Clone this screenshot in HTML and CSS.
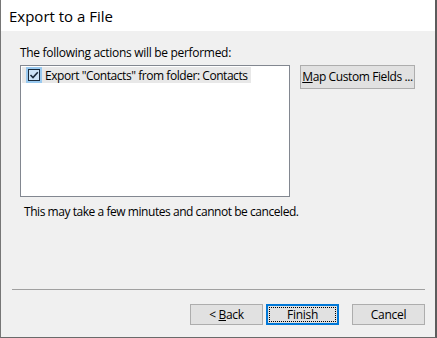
FILE: index.html
```html
<!DOCTYPE html>
<html lang="en">
<head>
    <meta charset="UTF-8">
    <title>Export to a File</title>
    <link rel="stylesheet" href="styles.css">
</head>
<body>
    <div class="dialog">
        <div class="title-bar">Export to a File</div>

        <div class="content">
            <p class="label">The following actions will be performed:</p>

            <div class="actions-row">
                <div class="action-list">
                    <div class="action-item">
                        <svg class="check" width="16" height="16" viewBox="0 0 16 16">
                            <rect x="0" y="0" width="16" height="16" fill="#99c9ef"/>
                            <rect x="2.5" y="2.5" width="11" height="11" fill="#cce4f7" stroke="#1a2b3c"/>
                            <path d="M4.5 8 L7 10.5 L11.8 5.2" fill="none" stroke="#1a2b3c" stroke-width="1.6"/>
                        </svg>
                        <span>Export "Contacts" from folder: Contacts</span>
                    </div>
                </div>
                <button class="btn btn-map"><u>M</u>ap Custom Fields ...</button>
            </div>

            <p class="note">This may take a few minutes and cannot be canceled.</p>
        </div>

        <div class="footer">
            <div class="separator"></div>
            <div class="buttons">
                <button class="btn">&lt; <u>B</u>ack</button>
                <button class="btn btn-default"><span class="focus">Finish</span></button>
                <button class="btn btn-cancel">Cancel</button>
            </div>
        </div>
    </div>
</body>
</html>
```

FILE: styles.css
```css
* {
    margin: 0;
    padding: 0;
    box-sizing: border-box;
}

body {
    font-family: 'Open Sans', 'Noto Sans', sans-serif;
    font-size: 12px;
    letter-spacing: -0.3px;
    color: #000;
    background: #3a3a3a;
    width: 437px;
    height: 338px;
    overflow: hidden;
    white-space: nowrap;
}

.dialog {
    width: 437px;
    height: 338px;
    background: #f0f0f0;
    border-left: 1px solid #767676;
    border-right: 2px solid #5c5c5c;
    border-bottom: 1px solid #6a6a6a;
    display: flex;
    flex-direction: column;
}

.title-bar {
    height: 31px;
    background: #fff;
    padding-left: 8px;
    font-size: 15px;
    letter-spacing: 0;
    line-height: 33px;
}

.content {
    flex: 1;
    padding: 14px 0 0 19px;
}

.label {
    line-height: 16px;
    margin-bottom: 4px;
}

.actions-row {
    display: flex;
    align-items: flex-start;
    gap: 10px;
}

.action-list {
    width: 270px;
    height: 132px;
    background: #fff;
    border: 1px solid #828790;
    padding: 1px;
}

.action-item {
    display: flex;
    align-items: center;
    gap: 3px;
    width: 229px;
    height: 16px;
    background: #e8e8e8;
    padding-left: 4px;
    letter-spacing: -0.45px;
}

.check {
    flex: none;
}

.btn {
    font-family: inherit;
    font-size: 12px;
    letter-spacing: inherit;
    color: #000;
    background: #e1e1e1;
    border: 1px solid #adadad;
    width: 73px;
    height: 21px;
    line-height: 19px;
    padding: 0;
}

.btn u {
    text-decoration-thickness: 1px;
}

.btn-map {
    width: 115px;
    height: 24px;
    line-height: 22px;
    letter-spacing: -0.4px;
}

.note {
    line-height: 16px;
    margin: 7px 0 0 4px;
    letter-spacing: -0.45px;
}

.footer {
    padding: 0 10px 12px 11px;
}

.separator {
    height: 1px;
    background: #a0a0a0;
    margin-bottom: 14px;
}

.buttons {
    display: flex;
    justify-content: flex-end;
    gap: 3px;
}

.btn-default {
    border: 2px solid #0078d7;
    padding: 1px;
    line-height: 13px;
}

.focus {
    display: block;
    height: 15px;
    line-height: 13px;
    border: 1px dotted #000;
}

.btn-cancel {
    margin-left: 10px;
}
```
